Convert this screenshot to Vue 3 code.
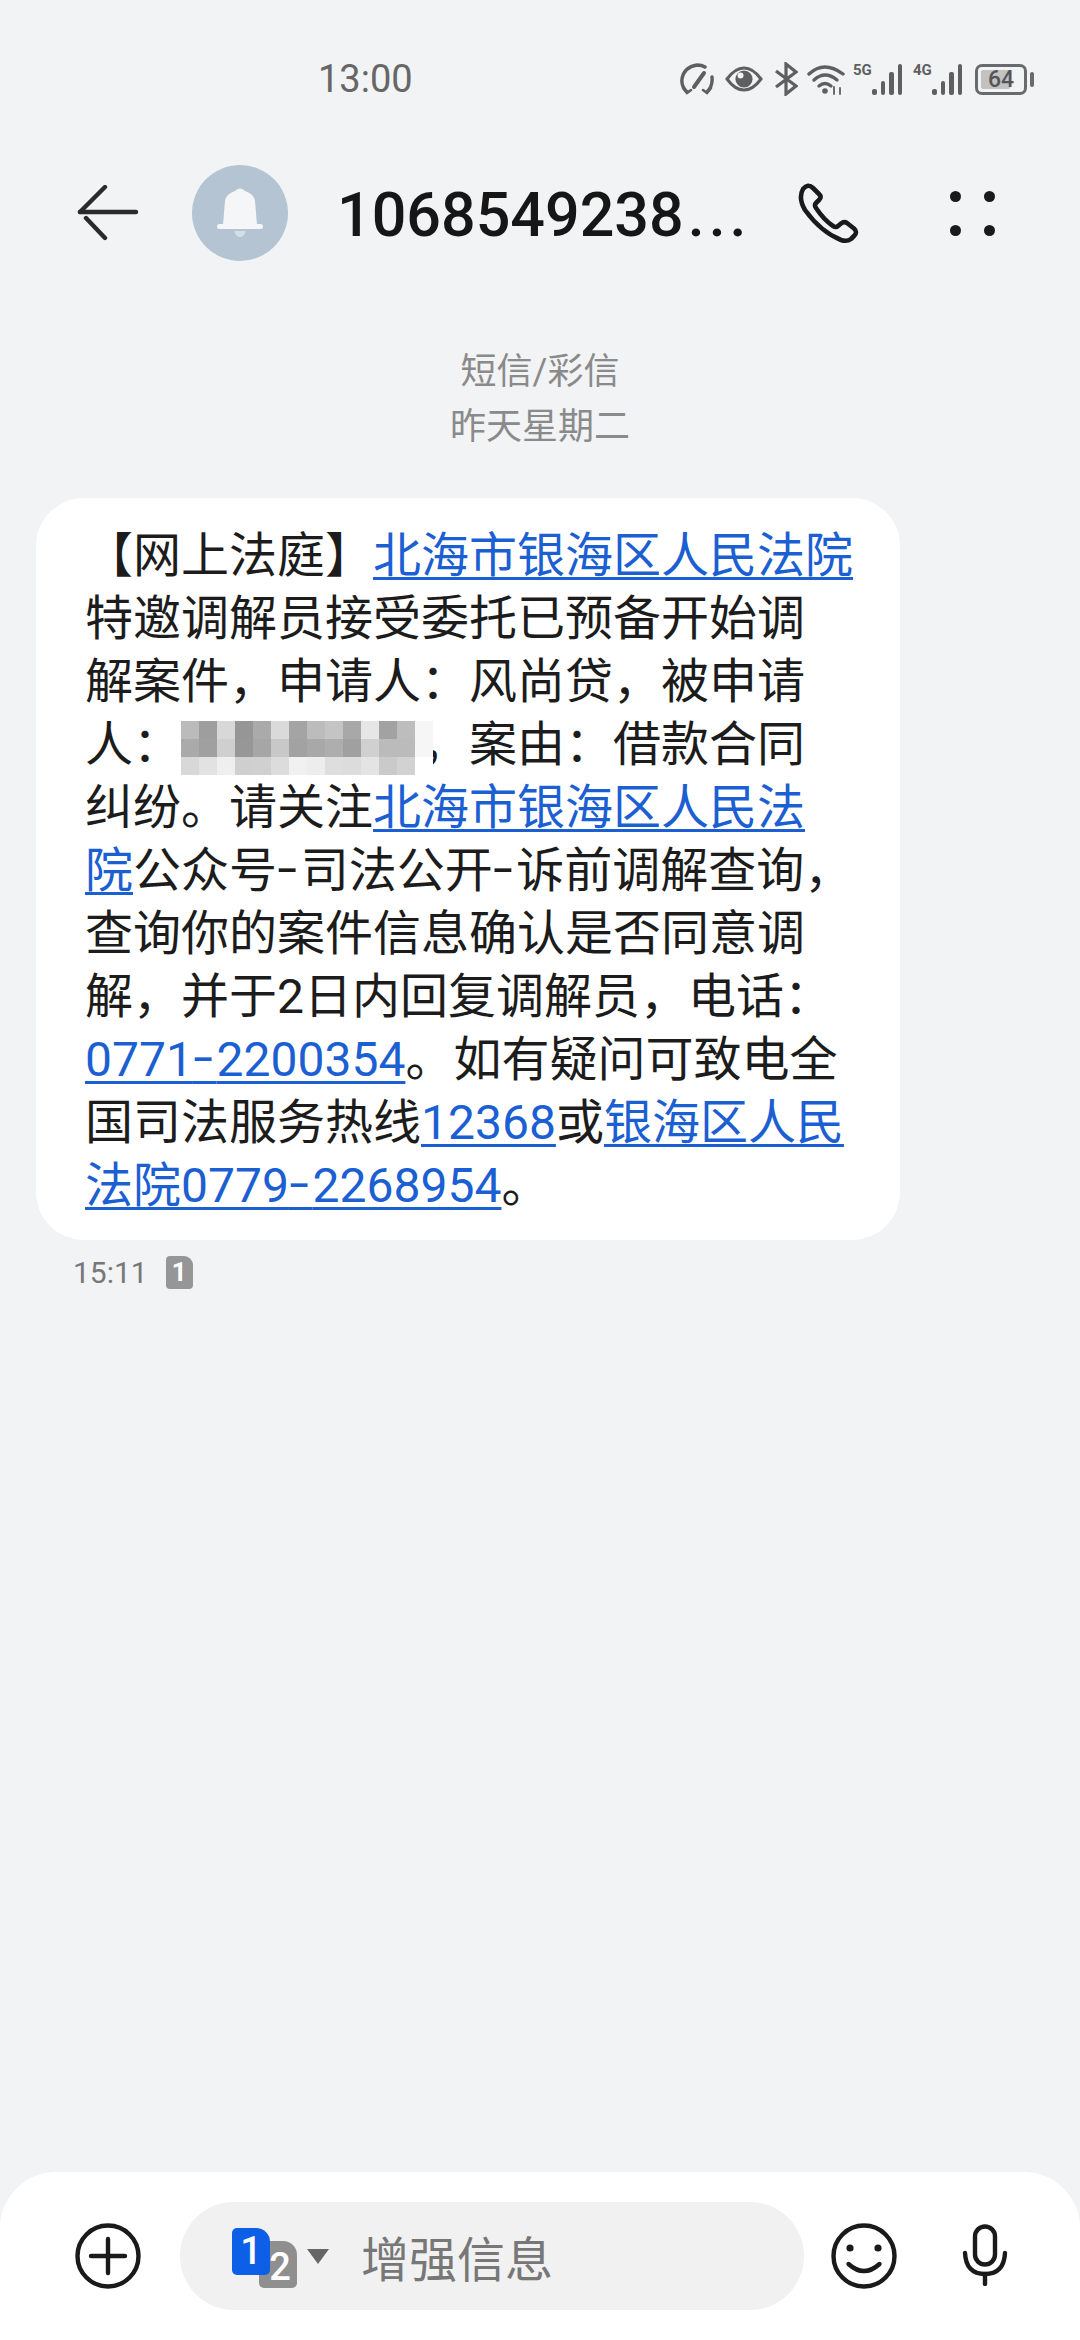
<template>
  <div class="page" lang="zh-CN">
    <!-- 状态栏 -->
    <div class="status-bar">
      <span class="clock">13:00</span>
      <div class="status-icons">
        <svg class="ic-speed" width="34" height="32" viewBox="0 0 34 32" fill="none" stroke="#5f5f5f" stroke-width="3.4" stroke-linecap="round">
          <path d="M7 29 Q1 23 2 16 Q4 4 17 2 Q22 2 25 4" />
          <path d="M27 29 Q33 23 32 14" />
          <path d="M14 24 L24 10" stroke-width="4" />
          <path d="M3 25 L7 30 L11 27 M31 25 L27 30 L23 27" stroke-width="2.6" />
        </svg>
        <svg class="ic-eye" width="38" height="26" viewBox="0 0 38 26">
          <path d="M2 13 Q10 2 19 2 Q28 2 36 13 Q28 24 19 24 Q10 24 2 13 Z" fill="none" stroke="#5f5f5f" stroke-width="3" />
          <circle cx="19" cy="13" r="8.6" fill="#5f5f5f" />
          <circle cx="15.5" cy="9.5" r="3" fill="#f2f3f5" />
        </svg>
        <svg class="ic-bt" width="24" height="34" viewBox="0 0 24 34" fill="none" stroke="#5f5f5f" stroke-width="3.2">
          <path d="M2 9 L22 24 L12 32 L12 2 L22 10 L2 25" />
        </svg>
        <svg class="ic-wifi" width="38" height="32" viewBox="0 0 38 32" fill="none" stroke="#5f5f5f" stroke-width="3.4" stroke-linecap="round">
          <path d="M2 11 Q17 -3 36 11" />
          <path d="M7 17 Q18 7 30 17" />
          <path d="M12 23 Q18 18 24 23" />
          <circle cx="18" cy="28" r="2.8" fill="#5f5f5f" stroke="none" />
          <path d="M27 24 L27 31 M33 25 L33 31" stroke-width="1.8" />
        </svg>
        <div class="signal">
          <span class="net">5G</span>
          <div class="bars">
            <i class="b1"></i><i class="b2"></i><i class="b3"></i><i class="b4"></i>
          </div>
        </div>
        <div class="signal second">
          <span class="net">4G</span>
          <div class="bars">
            <i class="b1"></i><i class="b2"></i><i class="b3"></i><i class="b4"></i>
          </div>
        </div>
        <div class="battery">
          <div class="battery-body">
            <div class="battery-level"></div>
            <span class="battery-num">64</span>
          </div>
          <div class="battery-tip"></div>
        </div>
      </div>
    </div>

    <!-- 顶部导航 -->
    <div class="nav">
      <svg class="back" width="62" height="56" viewBox="0 0 62 56" fill="none" stroke="#2a2a2a" stroke-width="4.4" stroke-linecap="round">
        <path d="M3 27 L59 27" />
        <path d="M3 27 L28 2" />
        <path d="M9 33 L28 53" />
      </svg>
      <svg class="avatar" width="96" height="96" viewBox="0 0 96 96">
        <circle cx="48" cy="48" r="48" fill="#b5c4d2" />
        <path d="M31 60 L33 36 Q34 29 43 26 Q48 21 53 26 Q62 29 63 36 L65 60 Z" fill="#f5f6f8" />
        <rect x="25" y="59" width="46" height="5" rx="2.5" fill="#f5f6f8" />
        <path d="M42 66 L54 66 Q52 72 48 72 Q44 72 42 66 Z" fill="#d5dee6" />
      </svg>
      <div class="title">1068549238<span class="dots">...</span></div>
      <svg class="phone" width="62" height="62" viewBox="0 0 62 62" fill="none" stroke="#1a1a1a" stroke-width="4.6" stroke-linejoin="round">
        <path d="M6 7 Q11 1 16 6 L22 12 Q25 15 22 18 L19 21 Q17 23 19 26 Q27 38 36 44 Q39 46 41 44 L44 41.5 Q47 39 50 41 L57 46.5 Q61 50 57 54 L54 57 Q50 60 44 58 Q24 50 8 28 Q1 16 6 7 Z" />
      </svg>
      <div class="more">
        <i></i><i></i><i></i><i></i>
      </div>
    </div>

    <div class="channel">
      <div>短信/彩信</div>
      <div>昨天星期二</div>
    </div>

    <!-- 短信内容 -->
    <div class="bubble">
      <div>【网上法庭】<a>北海市银海区人民法院</a></div>
      <div>特邀调解员接受委托已预备开始调</div>
      <div>解案件，申请人：风尚贷，被申请</div>
      <div>人：<span class="masked"><span class="mosaic"><i v-for="(c, i) in mosaic" :key="i" :style="{ background: c }"></i></span></span>，案由：借款合同</div>
      <div>纠纷。请关注<a>北海市银海区人民法</a></div>
      <div><a>院</a>公众号<span class="dash">-</span>司法公开<span class="dash">-</span>诉前调解查询，</div>
      <div>查询你的案件信息确认是否同意调</div>
      <div>解，并于2日内回复调解员，电话：</div>
      <div><a>0771<span class="dash">-</span>2200354</a>。如有疑问可致电全</div>
      <div>国司法服务热线<a>12368</a>或<a>银海区人民</a></div>
      <div><a>法院0779<span class="dash">-</span>2268954</a>。</div>
    </div>

    <div class="meta">
      <span class="meta-time">15:11</span>
      <span class="sim-badge">1</span>
    </div>

    <!-- 底部输入栏 -->
    <div class="composer">
      <svg width="66" height="66" viewBox="0 0 66 66" fill="none" stroke="#1a1a1a" stroke-width="4.4" stroke-linecap="round">
        <circle cx="33" cy="33" r="30.5" />
        <path d="M33 16 L33 50" />
        <path d="M16 33 L50 33" />
      </svg>
      <div class="input">
        <div class="sim-pick">
          <span class="sim sim-two">2</span>
          <span class="sim sim-one">1</span>
        </div>
        <span class="caret"></span>
        <span class="placeholder">增强信息</span>
      </div>
      <svg class="smile" width="66" height="66" viewBox="0 0 66 66" fill="none" stroke="#1a1a1a" stroke-width="4.4" stroke-linecap="round">
        <circle cx="33" cy="33" r="30.5" />
        <circle cx="19" cy="25" r="3.6" fill="#1a1a1a" stroke="none" />
        <circle cx="47" cy="25" r="3.6" fill="#1a1a1a" stroke="none" />
        <path d="M17.5 41 Q33 55 48.5 41" />
      </svg>
      <svg class="mic" width="46" height="62" viewBox="0 0 46 62" fill="none" stroke="#1a1a1a" stroke-width="4.4" stroke-linecap="round">
        <rect x="13" y="2.5" width="20" height="38" rx="10" />
        <path d="M3 29 Q4 50 23 50 Q42 50 43 29" />
        <path d="M23 50 L23 60" />
      </svg>
    </div>
  </div>
</template>

<script setup>
// 打码区域，每格 18px，14 列 3 行
const mosaic = [
  '#bbbbbb', '#9e9e9e', '#d8d8d8', '#969696', '#aaaaaa', '#dadada', '#a4a4a4', '#bcbcbc', '#c4c4c4', '#a8a8a8', '#e6e6e6', '#a2a2a2', '#bdbdbd', '#f6f6f6',
  '#aaaaaa', '#a0a0a0', '#cfcfcf', '#979797', '#a6a6a6', '#c8c8c8', '#a2a2a2', '#a8a8a8', '#aeaeae', '#a0a0a0', '#d0d0d0', '#bbbbbb', '#bbbbbb', '#f6f6f6',
  '#d8d8d8', '#e2e2e2', '#efefef', '#cfcfcf', '#d0d0d0', '#dcdcdc', '#f1f1f1', '#ededed', '#dedede', '#dcdcdc', '#e4e4e4', '#cacaca', '#d2d2d2', '#ffffff'
];
</script>

<style>
html, body {
  margin: 0;
  background: #f2f3f5;
}
</style>

<style scoped>
.page {
  width: 1080px;
  height: 2340px;
  display: flex;
  flex-direction: column;
  background: #f2f3f5;
  font-family: Roboto, "Noto Sans CJK SC", sans-serif;
  color: #1c1c1c;
  overflow: hidden;
}

.status-bar {
  height: 60px;
  margin-top: 49px;
  display: flex;
  align-items: center;
  justify-content: space-between;
  padding: 0 46px 0 318px;
}

.clock {
  font-size: 38px;
  color: #666;
}

.status-icons {
  display: flex;
  align-items: center;
}

.ic-eye { margin-left: 11px; }
.ic-bt { margin-left: 11px; }
.ic-wifi { margin-left: 9px; }

.signal {
  display: flex;
  align-items: flex-end;
  height: 32px;
  margin-left: 8px;
  position: relative;
}

.signal.second { margin-left: 11px; }

.net {
  font-size: 15px;
  line-height: 15px;
  font-weight: 700;
  color: #5f5f5f;
  align-self: flex-start;
  width: 19px;
}

.bars {
  display: flex;
  align-items: flex-end;
  gap: 4px;
  height: 31px;
}

.bars i {
  display: block;
  width: 4.5px;
  background: #5f5f5f;
  border-radius: 2px;
}

.bars .b1 { height: 6px; }
.bars .b2 { height: 14px; }
.bars .b3 { height: 23px; }
.bars .b4 { height: 31px; }

.battery {
  display: flex;
  align-items: center;
  margin-left: 13px;
}

.battery-body {
  position: relative;
  width: 52px;
  height: 31px;
  box-sizing: border-box;
  border: 3px solid #6a6a6a;
  border-radius: 7px;
  display: flex;
  align-items: center;
  justify-content: center;
}

.battery-level {
  position: absolute;
  left: 3px;
  top: 3px;
  bottom: 3px;
  width: 64%;
  background: #c2c2c2;
  border-radius: 2px;
}

.battery-num {
  position: relative;
  font-size: 23px;
  font-weight: 500;
  color: #555;
}

.battery-tip {
  width: 4px;
  height: 15px;
  margin-left: 3px;
  background: #6a6a6a;
  border-radius: 2px;
}

.nav {
  height: 96px;
  margin-top: 56px;
  display: flex;
  align-items: center;
  padding-left: 77px;
}

.avatar {
  margin-left: 53px;
  flex: none;
}

.title {
  width: 418px;
  margin-left: 49px;
  padding-top: 4px;
  font-size: 61px;
  font-weight: 500;
  color: #161616;
  white-space: nowrap;
}

.dots {
  letter-spacing: 4px;
  margin-left: 4px;
}

.phone { margin-left: 42px; }

.more {
  width: 45px;
  margin-left: 91px;
  display: grid;
  grid-template-columns: repeat(2, 11px);
  justify-content: space-between;
  row-gap: 23px;
}

.more i {
  width: 11px;
  height: 11px;
  border-radius: 50%;
  background: #1a1a1a;
}

.channel {
  margin-top: 84px;
  text-align: center;
  font-size: 36px;
  line-height: 55px;
  color: #8a8a8a;
}

.bubble {
  width: 864px;
  box-sizing: border-box;
  margin: 43px 0 0 36px;
  padding: 26px 0 23px 49px;
  background: #fff;
  border-radius: 48px;
  font-size: 48px;
  line-height: 63px;
  white-space: nowrap;
}

.bubble a {
  color: #1b5fd2;
  text-decoration: underline;
  text-decoration-thickness: 3px;
  text-underline-offset: 5px;
}

/* 短信里的连字符比 Roboto 的长一些 */
.dash {
  font-size: 72px;
  font-weight: 300;
  line-height: 0;
  letter-spacing: 3px;
  vertical-align: -6px;
}

.masked {
  display: inline-block;
  position: relative;
  width: 240px;
  height: 1px;
}

.mosaic {
  position: absolute;
  left: 0;
  bottom: -14px;
  display: grid;
  grid-template-columns: repeat(14, 18px);
  grid-auto-rows: 18px;
  filter: blur(0.6px);
}

.meta {
  display: flex;
  align-items: center;
  margin: 14px 0 0 73px;
  height: 36px;
}

.meta-time {
  font-size: 30px;
  color: #777;
}

.sim-badge {
  width: 27px;
  height: 33px;
  margin-left: 18px;
  background: #969696;
  border-radius: 4px 9px 4px 4px;
  color: #fff;
  font-size: 26px;
  font-weight: 700;
  line-height: 33px;
  text-align: center;
}

.composer {
  margin-top: auto;
  height: 168px;
  background: #fff;
  border-radius: 56px 56px 0 0;
  display: flex;
  align-items: flex-start;
  padding: 51px 0 0 75px;
  box-sizing: border-box;
}

.input {
  width: 624px;
  height: 108px;
  margin: -21px 0 0 39px;
  background: #f1f1f1;
  border-radius: 54px;
  display: flex;
  align-items: center;
  flex: none;
}

.sim-pick {
  position: relative;
  width: 65px;
  height: 60px;
  margin-left: 52px;
  margin-top: 3px;
}

.sim {
  position: absolute;
  width: 38px;
  height: 47px;
  color: #fff;
  text-align: center;
  font-size: 38px;
  font-weight: 500;
  line-height: 47px;
}

.sim-one {
  left: 0;
  top: 0;
  background: #0d5fe8;
  border-radius: 5px 14px 5px 5px;
}

.sim-two {
  left: 27px;
  top: 13px;
  background: #8f8f8f;
  border-radius: 5px 14px 5px 5px;
  line-height: 52px;
  text-indent: 4px;
}

.caret {
  width: 0;
  height: 0;
  margin-left: 10px;
  border-left: 11px solid transparent;
  border-right: 11px solid transparent;
  border-top: 15px solid #666;
}

.placeholder {
  margin-left: 32px;
  font-size: 48px;
  color: #777;
}

.smile { margin-left: 27px; }
.mic { margin: 1px 0 0 65px; }
</style>
